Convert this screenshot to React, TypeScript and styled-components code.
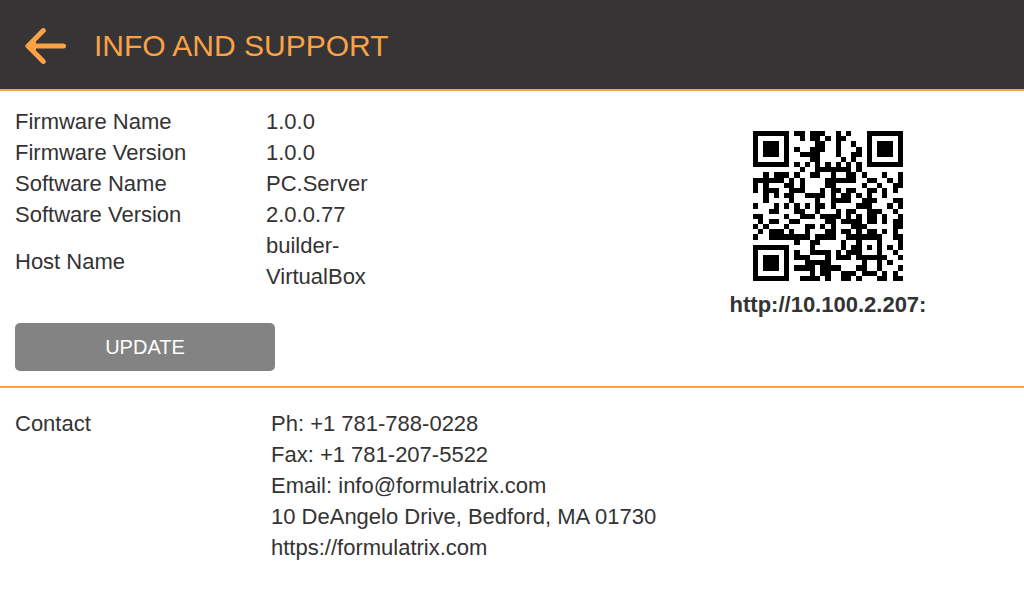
import React from 'react';
import styled, { createGlobalStyle } from 'styled-components';

/* ---------- QR code: version 3, level H, byte mode ---------- */

const SIZE = 29;
const DATA_BYTES = 26;
const ECC_BYTES = 22;
const BLOCKS = 2;
const LEVEL_H = 2;
const MASK = 0;

const multiply = (a: number, b: number): number => {
  let r = 0;
  for (let i = 7; i >= 0; i--) {
    r = (r << 1) ^ ((r >>> 7) * 0x11d);
    r ^= ((b >>> i) & 1) * a;
  }
  return r;
};

const generator = (degree: number): number[] => {
  const result: number[] = new Array(degree).fill(0);
  result[degree - 1] = 1;
  let root = 1;
  for (let i = 0; i < degree; i++) {
    for (let j = 0; j < degree; j++) {
      result[j] = multiply(result[j], root);
      if (j + 1 < degree) result[j] ^= result[j + 1];
    }
    root = multiply(root, 2);
  }
  return result;
};

const remainder = (data: number[], divisor: number[]): number[] => {
  const result = divisor.map(() => 0);
  data.forEach((byte) => {
    const factor = byte ^ (result.shift() as number);
    result.push(0);
    divisor.forEach((c, i) => {
      result[i] ^= multiply(c, factor);
    });
  });
  return result;
};

const codewords = (text: string): number[] => {
  const bits: number[] = [];
  const put = (value: number, length: number) => {
    for (let i = length - 1; i >= 0; i--) bits.push((value >>> i) & 1);
  };
  put(4, 4);
  put(text.length, 8);
  for (const ch of text) put(ch.charCodeAt(0), 8);
  put(0, 4);
  while (bits.length % 8) bits.push(0);
  for (let pad = 0xec; bits.length < DATA_BYTES * 8; pad ^= 0xec ^ 0x11) put(pad, 8);

  const bytes: number[] = [];
  for (let i = 0; i < bits.length; i += 8) bytes.push(parseInt(bits.slice(i, i + 8).join(''), 2));

  const perBlock = DATA_BYTES / BLOCKS;
  const blocks = [bytes.slice(0, perBlock), bytes.slice(perBlock)];
  const ecc = blocks.map((block) => remainder(block, generator(ECC_BYTES)));
  const all: number[] = [];
  for (let i = 0; i < perBlock; i++) blocks.forEach((block) => all.push(block[i]));
  for (let i = 0; i < ECC_BYTES; i++) ecc.forEach((block) => all.push(block[i]));
  return all;
};

const qrMatrix = (text: string): boolean[][] => {
  const grid = () => Array.from({ length: SIZE }, () => new Array<boolean>(SIZE).fill(false));
  const dark = grid();
  const fixed = grid();
  const set = (x: number, y: number, value: boolean) => {
    dark[y][x] = value;
    fixed[y][x] = true;
  };

  // Timing, finder and alignment patterns
  for (let i = 0; i < SIZE; i++) {
    set(6, i, i % 2 === 0);
    set(i, 6, i % 2 === 0);
  }
  [[3, 3], [SIZE - 4, 3], [3, SIZE - 4]].forEach(([cx, cy]) => {
    for (let dy = -4; dy <= 4; dy++) {
      for (let dx = -4; dx <= 4; dx++) {
        const x = cx + dx;
        const y = cy + dy;
        const d = Math.max(Math.abs(dx), Math.abs(dy));
        if (x >= 0 && x < SIZE && y >= 0 && y < SIZE) set(x, y, d !== 2 && d !== 4);
      }
    }
  });
  for (let dy = -2; dy <= 2; dy++) {
    for (let dx = -2; dx <= 2; dx++) {
      set(SIZE - 7 + dx, SIZE - 7 + dy, Math.max(Math.abs(dx), Math.abs(dy)) !== 1);
    }
  }

  // Format information
  const format = (LEVEL_H << 3) | MASK;
  let rem = format;
  for (let i = 0; i < 10; i++) rem = (rem << 1) ^ ((rem >>> 9) * 0x537);
  const formatBits = ((format << 10) | rem) ^ 0x5412;
  const bit = (i: number) => ((formatBits >>> i) & 1) === 1;
  for (let i = 0; i <= 5; i++) set(8, i, bit(i));
  set(8, 7, bit(6));
  set(8, 8, bit(7));
  set(7, 8, bit(8));
  for (let i = 9; i < 15; i++) set(14 - i, 8, bit(i));
  for (let i = 0; i < 8; i++) set(SIZE - 1 - i, 8, bit(i));
  for (let i = 8; i < 15; i++) set(8, SIZE - 15 + i, bit(i));
  set(8, SIZE - 8, true);

  // Data, in two-column strips from the right edge
  const all = codewords(text);
  let index = 0;
  for (let right = SIZE - 1; right >= 1; right -= 2) {
    if (right === 6) right = 5;
    const upward = ((right + 1) & 2) === 0;
    for (let step = 0; step < SIZE; step++) {
      const y = upward ? SIZE - 1 - step : step;
      for (let j = 0; j < 2; j++) {
        const x = right - j;
        if (fixed[y][x]) continue;
        const value = index < all.length * 8 && ((all[index >>> 3] >>> (7 - (index & 7))) & 1) === 1;
        index++;
        dark[y][x] = (x + y) % 2 === 0 ? !value : value;
      }
    }
  }
  return dark;
};

const QR_PIXELS = 150;

const QrCode = ({ text }: { text: string }) => {
  const edge = (i: number) => Math.round((i * QR_PIXELS) / SIZE);
  const path = qrMatrix(text)
    .flatMap((row, y) =>
      row.map((on, x) =>
        on ? `M${edge(x)} ${edge(y)}H${edge(x + 1)}V${edge(y + 1)}H${edge(x)}Z` : '',
      ),
    )
    .join('');
  return (
    <svg
      width={QR_PIXELS}
      height={QR_PIXELS}
      viewBox={`0 0 ${QR_PIXELS} ${QR_PIXELS}`}
      shapeRendering="crispEdges"
      role="img"
      aria-label={`QR code for ${text}`}
    >
      <path d={path} fill="#000" />
    </svg>
  );
};

/* ---------- Page ---------- */

const accent = '#faa245';

const GlobalStyle = createGlobalStyle`
  *, *::before, *::after { box-sizing: border-box; }
  body {
    margin: 0;
    background: #fff;
    color: #333;
    font-family: "Liberation Sans", Arial, sans-serif;
    font-size: 22px;
    line-height: 31px;
  }
`;

const Header = styled.header`
  display: flex;
  align-items: center;
  gap: 27px;
  padding: 3px 25px 0;
  height: 91px;
  background: #373435;
  border-bottom: 2px solid ${accent};
`;

const BackButton = styled.button`
  display: flex;
  padding: 0;
  border: 0;
  background: none;
  color: ${accent};
  cursor: pointer;
`;

const Title = styled.h1`
  margin: 0;
  color: ${accent};
  font-size: 30px;
  font-weight: 400;
  line-height: 40px;
`;

const InfoSection = styled.section`
  display: grid;
  grid-template-columns: 1fr 362px;
  padding: 15px;
  border-bottom: 2px solid ${accent};
`;

const InfoTable = styled.table`
  border-collapse: collapse;
  margin-bottom: 31px;

  th, td {
    padding: 0;
    text-align: left;
    font-weight: 400;
    vertical-align: middle;
  }
  th { width: 251px; }
  td { width: 125px; }
`;

const UpdateButton = styled.button`
  display: block;
  width: 260px;
  height: 48px;
  padding: 0;
  border: 0;
  border-radius: 5px;
  background: #838383;
  color: #fff;
  font-family: inherit;
  font-size: 20px;
  cursor: pointer;
`;

const QrPanel = styled.div`
  display: flex;
  flex-direction: column;
  align-items: center;
  gap: 8px;
  padding-top: 25px;
`;

const Address = styled.strong`
  font-weight: 700;
`;

const ContactSection = styled.section`
  display: grid;
  grid-template-columns: 256px 1fr;
  padding: 20px 15px;
`;

const ContactLabel = styled.h2`
  margin: 0;
  font-size: inherit;
  font-weight: 400;
`;

const ContactList = styled.address`
  display: flex;
  flex-direction: column;
  align-items: flex-start;
  font-style: normal;

  a {
    color: inherit;
    text-decoration: none;
  }
`;

const info: [string, string][] = [
  ['Firmware Name', '1.0.0'],
  ['Firmware Version', '1.0.0'],
  ['Software Name', 'PC.Server'],
  ['Software Version', '2.0.0.77'],
  ['Host Name', 'builder-VirtualBox'],
];

const serverUrl = 'http://10.100.2.207:';

export default function App() {
  return (
    <>
      <GlobalStyle />
      <Header>
        <BackButton type="button" aria-label="Back">
          <svg width="42" height="36" viewBox="0 0 42 36" fill="none" stroke="currentColor" strokeLinecap="round" strokeLinejoin="round">
            <path d="M18.3 2.6L3 18L18.3 33.4" strokeWidth="5" />
            <path d="M4 18H38.5" strokeWidth="5" />
            <path d="M0.4 18L4 14L11 13.5V22.5L4 22Z" fill="currentColor" stroke="none" />
          </svg>
        </BackButton>
        <Title>INFO AND SUPPORT</Title>
      </Header>
      <main>
        <InfoSection>
          <div>
            <InfoTable>
              <tbody>
                {info.map(([label, value]) => (
                  <tr key={label}>
                    <th scope="row">{label}</th>
                    <td>{value}</td>
                  </tr>
                ))}
              </tbody>
            </InfoTable>
            <UpdateButton type="button">UPDATE</UpdateButton>
          </div>
          <QrPanel>
            <QrCode text={serverUrl} />
            <Address>{serverUrl}</Address>
          </QrPanel>
        </InfoSection>
        <ContactSection>
          <ContactLabel>Contact</ContactLabel>
          <ContactList>
            <span>Ph: +1 781-788-0228</span>
            <span>Fax: +1 781-207-5522</span>
            <span>
              Email: <a href="mailto:info@formulatrix.com">info@formulatrix.com</a>
            </span>
            <span>10 DeAngelo Drive, Bedford, MA 01730</span>
            <a href="https://formulatrix.com">https://formulatrix.com</a>
          </ContactList>
        </ContactSection>
      </main>
    </>
  );
}
